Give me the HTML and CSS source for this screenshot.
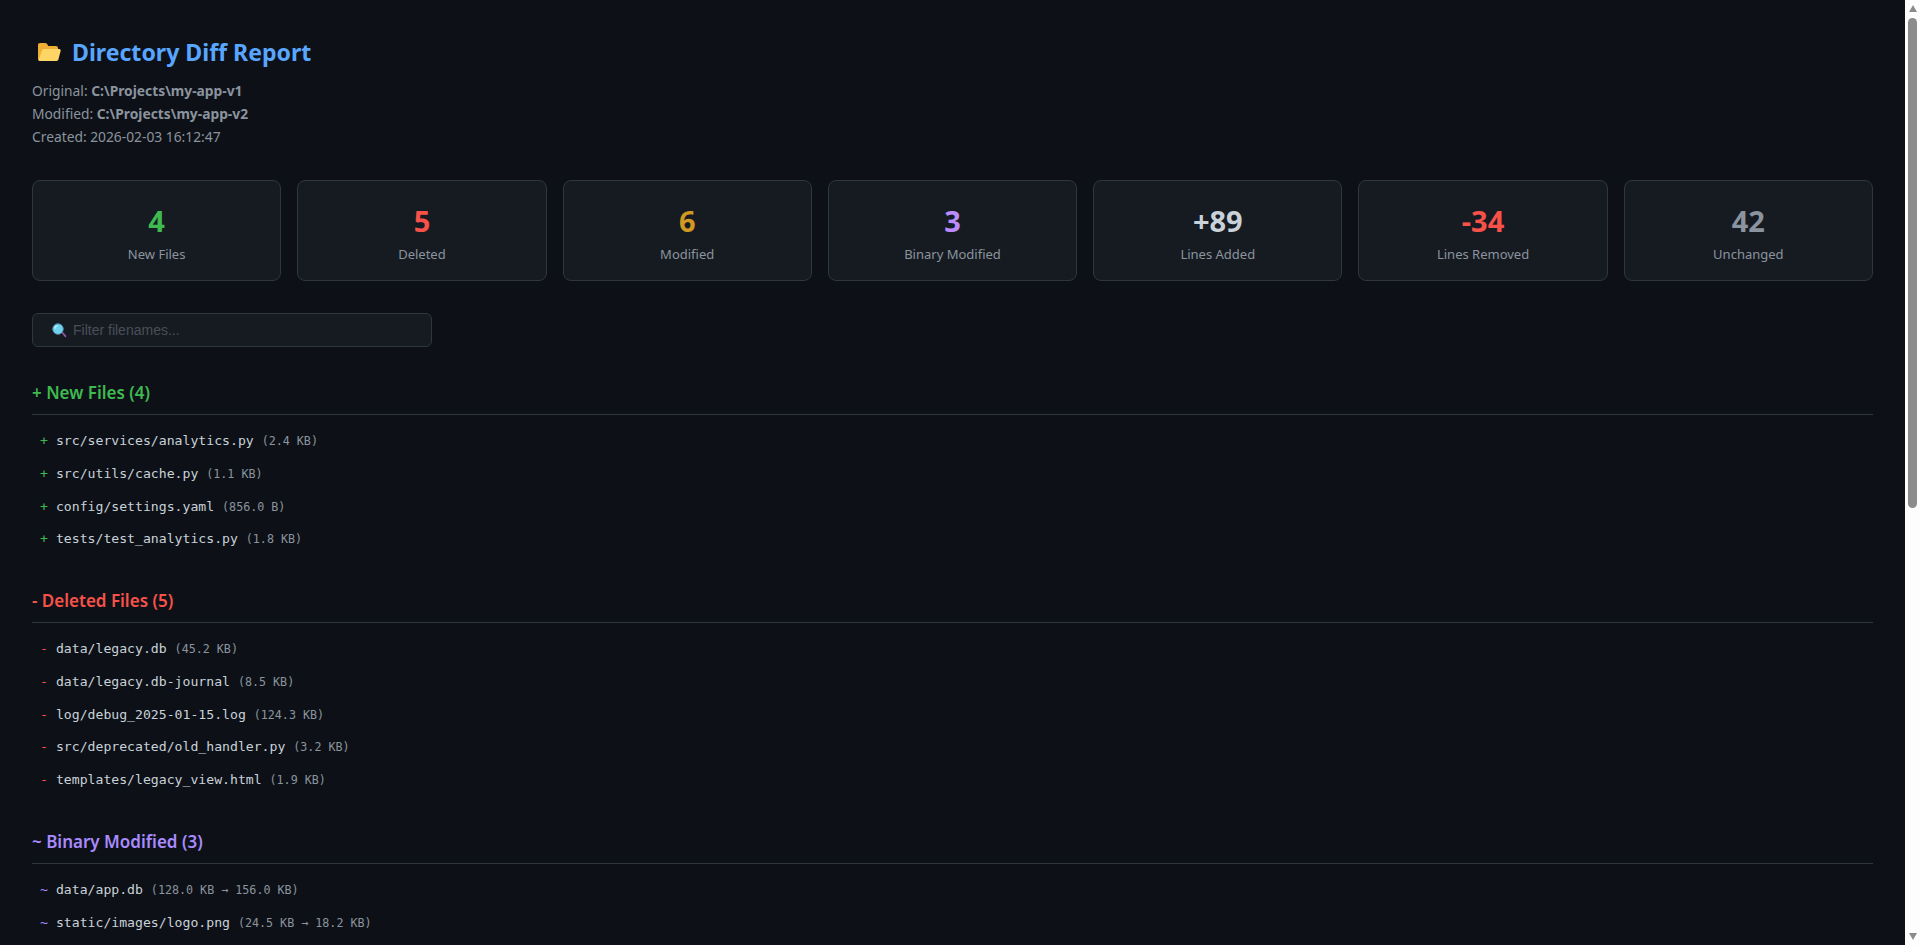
FILE: index.html
```html
<!DOCTYPE html>
<html lang="en">
<head>
    <meta charset="UTF-8">
    <meta name="viewport" content="width=device-width, initial-scale=1.0">
    <title>Directory Diff Report</title>
    <link rel="stylesheet" href="styles.css">
</head>
<body>
    <div class="report">
        <div class="header">
            <h1>
                <svg class="folder-icon" viewBox="0 0 24 20" width="24" height="20">
                    <path d="M1 3C1 1.9 1.9 1 3 1h5.2c.7 0 1.3.3 1.7.8L11.4 4H19c1.1 0 2 .9 2 2v3H7L3 19C1.9 19 1 18.1 1 17z" fill="#f0ae35"/>
                    <path d="M6.8 7h15.4c1 0 1.7.9 1.5 1.8l-2.4 9c-.2.7-.9 1.2-1.7 1.2H3c-1 0-1.5-.5-1.3-1.2L5.1 8.2C5.3 7.500 6 7 6.800 7z" fill="#ffd566"/>
                </svg>
                Directory Diff Report
            </h1>
            <div class="info">Original: <strong>C:\Projects\my-app-v1</strong></div>
            <div class="info">Modified: <strong>C:\Projects\my-app-v2</strong></div>
            <div class="info">Created: 2026-02-03 16:12:47</div>
        </div>

        <div class="summary">
            <div class="card"><div class="num green">4</div><div class="label">New Files</div></div>
            <div class="card"><div class="num red">5</div><div class="label">Deleted</div></div>
            <div class="card"><div class="num yellow">6</div><div class="label">Modified</div></div>
            <div class="card"><div class="num purple">3</div><div class="label">Binary Modified</div></div>
            <div class="card"><div class="num light">+89</div><div class="label">Lines Added</div></div>
            <div class="card"><div class="num red">-34</div><div class="label">Lines Removed</div></div>
            <div class="card"><div class="num gray">42</div><div class="label">Unchanged</div></div>
        </div>

        <label class="search">
            <svg class="search-icon" viewBox="0 0 16 16" width="15" height="15">
                <path d="M10 10l1.200-1 3.800 4.400c.4.5.3 1-.1 1.400-.4.4-1 .4-1.400-.1z" fill="#8e5aa8"/>
                <circle cx="6.400" cy="6.400" r="5.600" fill="#6fd3ee" stroke="#5a8fb5" stroke-width="1"/>
                <path d="M3 6a3.400 3.400 0 0 1 3-3" fill="none" stroke="#c9f1fb" stroke-width="1.200"/>
            </svg>
            <input type="text" placeholder="Filter filenames...">
        </label>

        <div class="section">
            <h2 class="green">+ New Files (4)</h2>
            <ul>
                <li><span class="mark green">+</span>src/services/analytics.py <span class="size">(2.4 KB)</span></li>
                <li><span class="mark green">+</span>src/utils/cache.py <span class="size">(1.1 KB)</span></li>
                <li><span class="mark green">+</span>config/settings.yaml <span class="size">(856.0 B)</span></li>
                <li><span class="mark green">+</span>tests/test_analytics.py <span class="size">(1.8 KB)</span></li>
            </ul>
        </div>

        <div class="section">
            <h2 class="red">- Deleted Files (5)</h2>
            <ul>
                <li><span class="mark red">-</span>data/legacy.db <span class="size">(45.2 KB)</span></li>
                <li><span class="mark red">-</span>data/legacy.db-journal <span class="size">(8.5 KB)</span></li>
                <li><span class="mark red">-</span>log/debug_2025-01-15.log <span class="size">(124.3 KB)</span></li>
                <li><span class="mark red">-</span>src/deprecated/old_handler.py <span class="size">(3.2 KB)</span></li>
                <li><span class="mark red">-</span>templates/legacy_view.html <span class="size">(1.9 KB)</span></li>
            </ul>
        </div>

        <div class="section">
            <h2 class="violet">~ Binary Modified (3)</h2>
            <ul>
                <li><span class="mark violet">~</span>data/app.db <span class="size">(128.0 KB → 156.0 KB)</span></li>
                <li><span class="mark violet">~</span>static/images/logo.png <span class="size">(24.5 KB → 18.2 KB)</span></li>
                <li><span class="mark violet">~</span>static/images/banner.jpg <span class="size">(310.7 KB → 296.4 KB)</span></li>
            </ul>
        </div>
    </div>

    <div class="scrollbar">
        <div class="arrow-up"></div>
        <div class="thumb"></div>
        <div class="track"></div>
        <div class="arrow-down"></div>
    </div>
</body>
</html>
```

FILE: styles.css
```css
* {
    margin: 0;
    padding: 0;
    box-sizing: border-box;
}

body {
    background: #0d1117;
    color: #c9d1d9;
    font-family: "Noto Sans", "Open Sans", sans-serif;
    font-size: 13.8px;
    line-height: 23px;
    margin-right: 15px;
}

.report {
    padding: 33px 32px 32px;
}

.header {
    margin-bottom: 32px;
}

h1 {
    display: flex;
    align-items: center;
    gap: 11px;
    font-size: 23.1px;
    line-height: 38px;
    font-weight: 700;
    color: #58a6ff;
    margin-bottom: 8px;
    padding-left: 5px;
}

.info {
    color: #8b949e;
}

.info strong {
    font-weight: 700;
}

.summary {
    display: grid;
    grid-template-columns: repeat(7, 1fr);
    gap: 16px;
    margin-bottom: 32px;
}

.card {
    height: 101px;
    padding: 23px 20px 0;
    background: #161b22;
    border: 1px solid #30363d;
    border-radius: 8px;
    text-align: center;
}

.num {
    font-size: 29px;
    line-height: 34px;
    font-weight: 700;
}

.label {
    margin-top: 6px;
    font-size: 13px;
    line-height: 20.8px;
    color: #8b949e;
}

.green { color: #3fb950; }
.red { color: #f85149; }
.yellow { color: #d29922; }
.purple { color: #bc8cff; }
.violet { color: #a98bff; }
.light { color: #c9d1d9; }
.gray { color: #8b949e; }

.search {
    display: flex;
    align-items: center;
    gap: 6px;
    width: 400px;
    height: 34px;
    margin-bottom: 33px;
    padding-left: 19px;
    background: #161b22;
    border: 1px solid #30363d;
    border-radius: 6px;
}

.search input {
    flex: 1;
    background: none;
    border: none;
    outline: none;
    color: #c9d1d9;
    font-family: "Liberation Sans", Arial, sans-serif;
    font-size: 14px;
}

.search input::placeholder {
    color: #484f58;
}

.section {
    margin-bottom: 32px;
}

h2 {
    font-size: 17px;
    line-height: 26px;
    font-weight: 600;
    padding-bottom: 8px;
    border-bottom: 1px solid #30363d;
    margin-bottom: 10px;
}

ul {
    list-style: none;
}

li {
    padding: 6px 8px;
    font-family: "DejaVu Sans Mono", "Liberation Mono", monospace;
    font-size: 13.15px;
    line-height: 20.75px;
    color: #c9d1d9;
}

.mark {
    margin-right: 8px;
}

.size {
    font-size: 11.7px;
    line-height: 1;
    color: #8b949e;
}

/* the window's scrollbar, drawn over the right edge */
.scrollbar {
    position: fixed;
    top: 0;
    right: 0;
    bottom: 0;
    width: 15px;
    padding: 5px 3px;
    background: #fdfdfd;
    display: flex;
    flex-direction: column;
    align-items: center;
}

.arrow-up,
.arrow-down {
    width: 0;
    height: 0;
    border-left: 4.5px solid transparent;
    border-right: 4.5px solid transparent;
}

.arrow-up {
    border-bottom: 7px solid #8b8b8b;
}

.arrow-down {
    border-top: 7px solid #8b8b8b;
}

.thumb {
    width: 9px;
    height: 490px;
    margin-top: 6px;
    background: #8b8b8b;
    border-radius: 5px;
}

.track {
    flex: 1;
}
```
